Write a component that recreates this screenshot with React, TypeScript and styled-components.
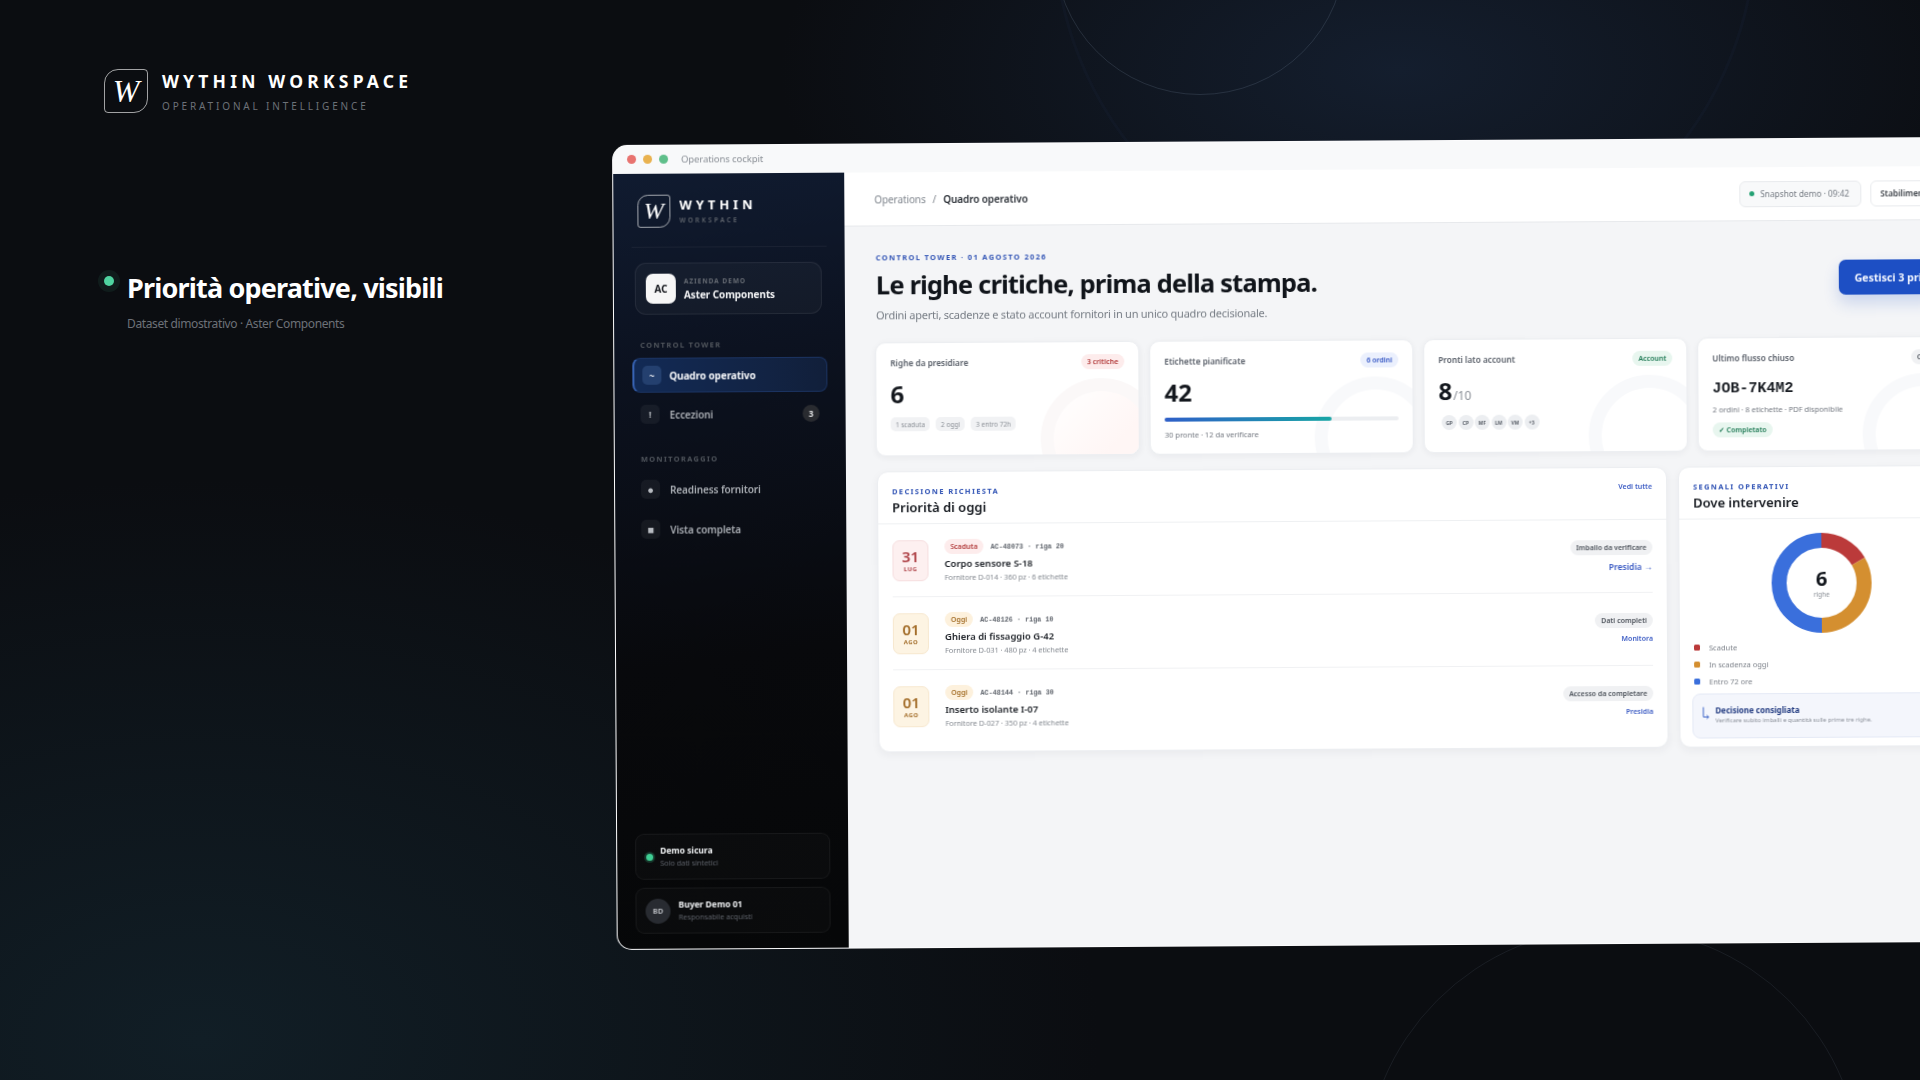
import React from "react";
import styled, { createGlobalStyle } from "styled-components";

const SANS = `"Noto Sans", "Open Sans", sans-serif`;
const MONO = `"Liberation Mono", "DejaVu Sans Mono", monospace`;

const Global = createGlobalStyle`
  html, body {
    margin: 0;
    padding: 0;
    background: #0b0d11;
    font-family: ${SANS};
  }
  *, *::after { box-sizing: border-box; }
`;

const Stage = styled.div`
  position: relative;
  display: flex;
  width: 1920px;
  height: 1080px;
  overflow: hidden;
  background:
    radial-gradient(620px 300px at 1400px 70px, #141e2e 0%, rgba(20, 30, 46, 0) 100%),
    radial-gradient(900px 560px at 200px 1040px, #111e26 0%, rgba(17, 30, 38, 0) 100%),
    #0b0d11;
`;

const Ring = styled.div<{ $x: number; $y: number; $r: number; $w?: number; $c: string }>`
  position: absolute;
  left: ${(p) => p.$x - p.$r}px;
  top: ${(p) => p.$y - p.$r}px;
  width: ${(p) => p.$r * 2}px;
  height: ${(p) => p.$r * 2}px;
  border-radius: 50%;
  border: ${(p) => p.$w ?? 1}px solid ${(p) => p.$c};
`;

/* left caption */
const Intro = styled.div`
  position: relative;
  flex: none;
  width: 612px;
  padding: 69px 0 0 104px;
`;

const Brand = styled.div`
  display: flex;
  gap: 14px;
`;

const LogoBox = styled.div<{ $size: number; $font: number }>`
  display: flex;
  align-items: center;
  justify-content: center;
  flex: none;
  width: ${(p) => p.$size}px;
  height: ${(p) => p.$size}px;
  border: 1px solid rgba(255, 255, 255, 0.62);
  border-radius: 32% 9% 32% 9%;
  color: #fff;
  font-family: "Liberation Serif", serif;
  font-style: italic;
  font-size: ${(p) => p.$font}px;
`;

const BrandName = styled.div`
  margin-top: 1px;
  color: #fff;
  font-size: 17.5px;
  line-height: 22px;
  font-weight: 700;
  letter-spacing: 4.2px;
  white-space: nowrap;
`;

const BrandSub = styled.div`
  margin-top: 8px;
  color: #6d7178;
  font-size: 10px;
  line-height: 13px;
  letter-spacing: 2.85px;
  white-space: nowrap;
`;

const Lead = styled.div`
  display: flex;
  gap: 13px;
  margin-top: 155px;
`;

const LeadDot = styled.span`
  flex: none;
  width: 10px;
  height: 10px;
  margin-top: 8px;
  border-radius: 50%;
  background: #4fd3a0;
  box-shadow: 0 0 0 6px rgba(79, 211, 160, 0.08);
`;

const LeadTitle = styled.h1`
  margin: 0;
  margin-top: 2px;
  color: #fff;
  font-size: 27px;
  line-height: 36px;
  font-weight: 700;
  letter-spacing: -0.82px;
  white-space: nowrap;
`;

const LeadSub = styled.p`
  margin: 10px 0 0;
  color: #6d7178;
  font-size: 12px;
  line-height: 16px;
  letter-spacing: -0.38px;
`;

/* app window */
const Window = styled.div`
  position: relative;
  flex: none;
  display: flex;
  flex-direction: column;
  width: 1381px;
  height: 805px;
  margin-top: 145px;
  overflow: hidden;
  border: 1px solid rgba(255, 255, 255, 0.72);
  border-radius: 15px;
  background: #f4f5f7;
  transform-origin: 0 0;
  transform: rotate(-0.34deg);
  filter: blur(0.3px);
`;

const TitleBar = styled.div`
  flex: none;
  display: flex;
  align-items: center;
  gap: 7px;
  height: 28px;
  padding: 0 0 1px 14px;
  background: #f8f9fa;
`;

const Light = styled.span<{ $c: string }>`
  width: 9px;
  height: 9px;
  border-radius: 50%;
  background: ${(p) => p.$c};
`;

const TitleText = styled.span`
  margin-left: 6px;
  color: #8a8f96;
  font-size: 9.5px;
  letter-spacing: -0.1px;
`;

const Body = styled.div`
  flex: 1;
  min-height: 0;
  display: flex;
`;

/* sidebar */
const Side = styled.aside`
  flex: none;
  display: flex;
  flex-direction: column;
  width: 231px;
  padding: 21px 18px 15px;
  background: linear-gradient(172deg, #101b30 0%, #0c1220 24%, #08090c 62%, #060708 100%);
`;

const SideBrand = styled.div`
  display: flex;
  gap: 9px;
  height: 33px;
  padding-left: 6px;
`;

const SideName = styled.div`
  margin-top: 3px;
  color: #fff;
  font-size: 13px;
  line-height: 15px;
  font-weight: 700;
  letter-spacing: 3.9px;
`;

const SideSub = styled.div`
  margin-top: 3px;
  color: #5f646c;
  font-size: 6.5px;
  line-height: 9px;
  font-weight: 600;
  letter-spacing: 2.3px;
`;

const SideDivider = styled.div`
  height: 1px;
  margin-top: 19px;
  background: rgba(255, 255, 255, 0.05);
`;

const Company = styled.div`
  display: flex;
  align-items: center;
  gap: 8px;
  height: 52px;
  margin: 15px 5px 0 3px;
  padding: 0 10px;
  border: 1px solid rgba(255, 255, 255, 0.07);
  border-radius: 11px;
  background: rgba(255, 255, 255, 0.03);
`;

const CompanyTile = styled.div`
  display: flex;
  align-items: center;
  justify-content: center;
  width: 30px;
  height: 30px;
  border-radius: 7px;
  background: #f6f6f6;
  color: #14171c;
  font-size: 10px;
  font-weight: 700;
`;

const CompanyLabel = styled.div`
  color: #666b73;
  font-size: 6.5px;
  line-height: 9px;
  font-weight: 700;
  letter-spacing: 1px;
`;

const CompanyName = styled.div`
  margin-top: 2px;
  color: #f2f3f5;
  font-size: 10px;
  line-height: 14px;
  font-weight: 700;
  letter-spacing: -0.1px;
`;

const SideLabel = styled.div<{ $top: number }>`
  margin-top: ${(p) => p.$top}px;
  padding-left: 8px;
  color: #50555c;
  font-size: 7.5px;
  line-height: 10px;
  font-weight: 700;
  letter-spacing: 1.3px;
`;

const NavItem = styled.div<{ $active?: boolean; $top: number }>`
  display: flex;
  align-items: center;
  gap: ${(p) => (p.$active ? 8 : 10)}px;
  height: 35px;
  margin-top: ${(p) => p.$top}px;
  padding: 0 8px;
  border-radius: 8px;
  color: ${(p) => (p.$active ? "#f5f7fa" : "#a9adb3")};
  font-size: 10px;
  font-weight: ${(p) => (p.$active ? 700 : 600)};
  letter-spacing: -0.1px;
  ${(p) =>
    p.$active
      ? `background: linear-gradient(90deg, #122a55, #122343 70%, #111f3a);
         border: 1px solid #1b3361;
         border-left: 2px solid #3763b4;`
      : ""}
`;

const NavIcon = styled.span<{ $active?: boolean; $size?: number }>`
  display: flex;
  align-items: center;
  justify-content: center;
  flex: none;
  width: 19px;
  height: 19px;
  border-radius: 5px;
  background: ${(p) => (p.$active ? "#24406f" : "rgba(255,255,255,0.05)")};
  color: ${(p) => (p.$active ? "#fff" : "#b7bbc1")};
  font-size: ${(p) => p.$size ?? 9}px;
  font-weight: 700;
`;

const NavCount = styled.span`
  display: flex;
  align-items: center;
  justify-content: center;
  width: 17px;
  height: 17px;
  margin-left: auto;
  border-radius: 50%;
  background: #292b30;
  color: #e3e4e6;
  font-size: 8px;
  font-weight: 700;
`;

const SideCard = styled.div<{ $auto?: boolean }>`
  display: flex;
  align-items: center;
  flex: none;
  gap: 7px;
  height: 46px;
  margin-top: ${(p) => (p.$auto ? "auto" : "8px")};
  padding: 0 9px;
  border: 1px solid rgba(255, 255, 255, 0.055);
  border-radius: 9px;
  background: rgba(255, 255, 255, 0.018);
`;

const SafeDot = styled.span`
  flex: none;
  width: 7px;
  height: 7px;
  margin-left: 1px;
  border-radius: 50%;
  background: #3fcf94;
  box-shadow: 0 0 0 2px rgba(63, 207, 148, 0.22);
`;

const Avatar = styled.span`
  display: flex;
  align-items: center;
  justify-content: center;
  flex: none;
  width: 25px;
  height: 25px;
  margin-right: 1px;
  border-radius: 50%;
  background: #282b31;
  color: #b5b8bd;
  font-size: 7.5px;
  font-weight: 700;
`;

const SideCardTitle = styled.div`
  color: #eef0f2;
  font-size: 8.5px;
  line-height: 12px;
  font-weight: 700;
`;

const SideCardSub = styled.div`
  margin-top: 1px;
  color: #5c6068;
  font-size: 7.5px;
  line-height: 11px;
  letter-spacing: -0.1px;
`;

/* main */
const Main = styled.main`
  flex: 1;
  min-width: 0;
  display: flex;
  flex-direction: column;
`;

const TopBar = styled.div`
  flex: none;
  display: flex;
  align-items: center;
  height: 54px;
  padding: 0 30px;
  border-bottom: 1px solid #e7e9ec;
  background: #fff;
`;

const Crumb = styled.span<{ $strong?: boolean }>`
  margin-right: 7px;
  color: ${(p) => (p.$strong ? "#2a2f36" : "#7f858d")};
  font-size: 10px;
  font-weight: ${(p) => (p.$strong ? 600 : 400)};
  letter-spacing: -0.1px;
`;

const TopChip = styled.div<{ $first?: boolean; $w: number }>`
  display: flex;
  align-items: center;
  gap: 6px;
  width: ${(p) => p.$w}px;
  height: 26px;
  margin-left: ${(p) => (p.$first ? "auto" : "9px")};
  padding: 0 9px;
  overflow: hidden;
  border: 1px solid #e8eaed;
  border-radius: 6px;
  background: ${(p) => (p.$first ? "#f8f9fa" : "#fff")};
  color: ${(p) => (p.$first ? "#747a82" : "#3a3f46")};
  font-size: 8.3px;
  font-weight: ${(p) => (p.$first ? 400 : 600)};
  white-space: nowrap;
`;

const ChipDot = styled.span`
  flex: none;
  width: 5px;
  height: 5px;
  border-radius: 50%;
  background: #24a173;
`;

const Content = styled.div`
  padding: 26px 30px 0 31px;
`;

const HeadRow = styled.div`
  display: flex;
  justify-content: space-between;
  height: 90px;
`;

const Eyebrow = styled.div`
  color: #3456b6;
  font-size: 7.5px;
  line-height: 11px;
  font-weight: 700;
  letter-spacing: 1.35px;
  white-space: nowrap;
`;

const PageTitle = styled.h2`
  margin: 4px 0 0;
  color: #10141a;
  font-size: 25.5px;
  line-height: 34px;
  font-weight: 700;
  letter-spacing: -0.82px;
  white-space: nowrap;
`;

const PageSub = styled.p`
  margin: 6px 0 0;
  color: #767c84;
  font-size: 11px;
  line-height: 15px;
  letter-spacing: -0.24px;
`;

const PrimaryButton = styled.button`
  flex: none;
  width: 124px;
  height: 35px;
  margin-top: 13px;
  padding: 0;
  border: 0;
  border-radius: 7px;
  background: #1d4fc4;
  box-shadow: 0 8px 16px rgba(29, 79, 196, 0.2);
  color: #f2f6ff;
  font-family: inherit;
  font-size: 10.6px;
  font-weight: 700;
  white-space: nowrap;
`;

const KpiGrid = styled.div`
  display: grid;
  grid-template-columns: repeat(4, 264px);
  gap: 10px;
  margin-left: -1px;
`;

const Kpi = styled.div<{ $tint?: boolean }>`
  position: relative;
  height: 114px;
  padding: 11px 14px;
  overflow: hidden;
  border: 1px solid #eceef1;
  border-radius: 10px;
  background: #fff;
  box-shadow: 0 2px 6px rgba(30, 40, 60, 0.05);

  & > * {
    position: relative;
    z-index: 1;
  }

  &::after {
    content: "";
    position: absolute;
    right: -24px;
    bottom: -46px;
    width: 122px;
    height: 122px;
    border-radius: 50%;
    border: 13px solid ${(p) => (p.$tint ? "#fbf8f8" : "#f8f9fb")};
    background: ${(p) =>
      p.$tint ? "linear-gradient(135deg, #ffffff, #fff6f5 60%)" : "transparent"};
  }
`;

const KpiHead = styled.div`
  display: flex;
  align-items: center;
  justify-content: space-between;
  height: 16px;
`;

const KpiTitle = styled.span`
  color: #5a606a;
  font-size: 8.3px;
  font-weight: 600;
`;

const Tone = {
  red: { bg: "#fdecec", fg: "#b23b3b" },
  blue: { bg: "#ebf0fd", fg: "#3456c4" },
  green: { bg: "#e8f6ef", fg: "#1f7a55" },
  gray: { bg: "#f0f1f3", fg: "#4e545c" },
  amber: { bg: "#fdf1dd", fg: "#a5702a" },
};

const Pill = styled.span<{ $tone: keyof typeof Tone }>`
  display: inline-flex;
  align-items: center;
  flex: none;
  height: 15px;
  padding: 0 6px;
  border-radius: 8px;
  background: ${(p) => Tone[p.$tone].bg};
  color: ${(p) => Tone[p.$tone].fg};
  font-size: 7px;
  font-weight: 600;
  white-space: nowrap;
`;

const KpiValue = styled.div`
  margin-top: 8px;
  color: #14181e;
  font-size: 24px;
  line-height: 32px;
  font-weight: 700;
`;

const KpiUnit = styled.span`
  margin-left: 1px;
  color: #8b9098;
  font-size: 12px;
  font-weight: 400;
`;

const MiniRow = styled.div`
  display: flex;
  gap: 6px;
  margin-top: 7px;
`;

const MiniChip = styled.span`
  display: inline-flex;
  align-items: center;
  height: 14px;
  padding: 0 5px;
  border-radius: 5px;
  background: #f1f2f4;
  color: #8a8f96;
  font-size: 6.5px;
`;

const Bar = styled.div`
  height: 4px;
  margin-top: 9px;
  border-radius: 2px;
  background: #eceef1;
`;

const BarFill = styled.div`
  height: 100%;
  border-radius: 2px;
  background: linear-gradient(90deg, #2f5fc8, #17a5a5);
`;

const KpiNote = styled.div<{ $top: number }>`
  margin-top: ${(p) => p.$top}px;
  color: #737880;
  font-size: 7.5px;
  line-height: 11px;
  white-space: nowrap;
`;

const Initials = styled.div`
  display: flex;
  gap: 1.5px;
  margin: 3px 0 0 3px;
`;

const Initial = styled.span`
  display: flex;
  align-items: center;
  justify-content: center;
  width: 15px;
  height: 15px;
  border-radius: 50%;
  background: #eceef1;
  color: #5b616a;
  font-size: 5px;
  font-weight: 700;
`;

const JobCode = styled.div`
  margin-top: 14px;
  color: #1a1e24;
  font-family: ${MONO};
  font-size: 15px;
  line-height: 20px;
  font-weight: 700;
`;

const PanelGrid = styled.div`
  display: grid;
  grid-template-columns: 790px 286px;
  gap: 11px;
  margin-top: 15px;
`;

const Panel = styled.section`
  height: 281px;
  overflow: hidden;
  border: 1px solid #eceef1;
  border-radius: 11px;
  background: #fff;
  box-shadow: 0 3px 8px rgba(30, 40, 60, 0.05);
`;

const PanelHead = styled.div`
  display: flex;
  justify-content: space-between;
  height: 52px;
  padding: 14px 14px 0;
  border-bottom: 1px solid #eef0f2;
`;

const PanelTitle = styled.h3`
  margin: 2px 0 0;
  color: #15191f;
  font-size: 13px;
  line-height: 17px;
  font-weight: 600;
`;

const LinkText = styled.span<{ $size?: number }>`
  color: #3c5cc4;
  font-size: ${(p) => p.$size ?? 7}px;
  font-weight: 600;
  white-space: nowrap;
`;

const Row = styled.div`
  display: flex;
  align-items: flex-start;
  height: 73px;
  margin: 0 14px;
  padding-top: 16px;
  border-bottom: 1px solid #f0f1f3;

  &:last-child {
    border-bottom: 0;
  }
`;

const DateBox = styled.div<{ $tone: "red" | "amber" }>`
  display: flex;
  flex-direction: column;
  align-items: center;
  justify-content: center;
  flex: none;
  width: 36px;
  height: 41px;
  border: 1px solid ${(p) => (p.$tone === "red" ? "#f6dedf" : "#f7e8cf")};
  border-radius: 7px;
  background: ${(p) => (p.$tone === "red" ? "#fdf0f0" : "#fdf4e3")};
  color: ${(p) => (p.$tone === "red" ? "#ad3f44" : "#a26c28")};
`;

const DateDay = styled.span`
  font-size: 15px;
  line-height: 17px;
  font-weight: 600;
`;

const DateMonth = styled.span`
  font-size: 6px;
  line-height: 9px;
  font-weight: 700;
  letter-spacing: 0.4px;
`;

const RowText = styled.div`
  flex: 1;
  margin-left: 16px;
`;

const RowTop = styled.div`
  display: flex;
  align-items: center;
  gap: 7px;
  height: 15px;
  margin-top: -1px;
`;

const RowCode = styled.span`
  color: #5f646c;
  font-family: ${MONO};
  font-size: 6.8px;
  font-weight: 700;
`;

const RowTitle = styled.div`
  margin-top: 3px;
  color: #20242a;
  font-size: 9.5px;
  line-height: 13px;
  font-weight: 600;
`;

const RowSub = styled.div`
  margin-top: 2px;
  color: #868b92;
  font-size: 7.5px;
  line-height: 11px;
  letter-spacing: -0.1px;
`;

const RowSide = styled.div`
  display: flex;
  flex-direction: column;
  align-items: flex-end;
  gap: 6px;
  padding-top: 4px;
`;

const DonutWrap = styled.div`
  position: relative;
  width: 100px;
  height: 100px;
  margin: 14px auto 0;
`;

const DonutCenter = styled.div`
  position: absolute;
  inset: 0;
  display: flex;
  flex-direction: column;
  align-items: center;
  justify-content: center;
`;

const DonutValue = styled.span`
  color: #14181e;
  font-size: 20px;
  line-height: 22px;
  font-weight: 700;
`;

const DonutLabel = styled.span`
  color: #8a8f96;
  font-size: 6.5px;
  line-height: 9px;
`;

const Legend = styled.div`
  display: flex;
  flex-direction: column;
  gap: 6px;
  margin: 8px 0 0 14px;
`;

const LegendItem = styled.div`
  display: flex;
  align-items: center;
  gap: 9px;
  height: 11px;
  color: #7d828a;
  font-size: 7.5px;
`;

const Swatch = styled.span<{ $c: string }>`
  width: 6px;
  height: 6px;
  border-radius: 1.5px;
  background: ${(p) => p.$c};
`;

const Advice = styled.div`
  display: flex;
  gap: 5px;
  height: 45px;
  margin: 7px 0 0 12px;
  padding: 10px 8px;
  border: 1px solid #e4e9f5;
  border-radius: 8px;
  background: #f4f6fc;
`;

const AdviceTitle = styled.div`
  color: #213a80;
  font-size: 8px;
  line-height: 11px;
  font-weight: 700;
`;

const AdviceText = styled.div`
  margin-top: 1px;
  color: #8a8f98;
  font-size: 6px;
  line-height: 9px;
  white-space: nowrap;
`;

const rows = [
  { day: "31", month: "LUG", tone: "red", pill: "Scaduta", code: "AC-48073 · riga 20", title: "Corpo sensore S-18", sub: "Fornitore D-014 · 360 pz · 6 etichette", status: "Imballo da verificare", link: "Presidia →", size: 8.5 },
  { day: "01", month: "AGO", tone: "amber", pill: "Oggi", code: "AC-48126 · riga 10", title: "Ghiera di fissaggio G-42", sub: "Fornitore D-031 · 480 pz · 4 etichette", status: "Dati completi", link: "Monitora", size: 7 },
  { day: "01", month: "AGO", tone: "amber", pill: "Oggi", code: "AC-48144 · riga 30", title: "Inserto isolante I-07", sub: "Fornitore D-027 · 350 pz · 4 etichette", status: "Accesso da completare", link: "Presidia", size: 7 },
] as const;

const legend = [
  { label: "Scadute", color: "#bb3a3a" },
  { label: "In scadenza oggi", color: "#d48f30" },
  { label: "Entro 72 ore", color: "#3a6fdc" },
];

const Donut = () => (
  <svg width="100" height="100" viewBox="0 0 100 100">
    <g transform="rotate(-90 50 50)" fill="none" strokeWidth="15">
      <circle cx="50" cy="50" r="42.5" pathLength={6} stroke="#bb3a3a" strokeDasharray="1 5" />
      <circle cx="50" cy="50" r="42.5" pathLength={6} stroke="#d48f30" strokeDasharray="2 4" strokeDashoffset={-1} />
      <circle cx="50" cy="50" r="42.5" pathLength={6} stroke="#3a6fdc" strokeDasharray="3 3" strokeDashoffset={-3} />
    </g>
  </svg>
);

const AdviceIcon = () => (
  <svg width="9" height="14" viewBox="0 0 9 14" fill="none" style={{ flex: "none", marginTop: 2 }}>
    <path d="M2 1v9.5h5M5.6 9l1.6 1.5L5.6 12" stroke="#3f66c8" strokeWidth="1" strokeLinecap="round" strokeLinejoin="round" />
  </svg>
);

export default function App() {
  return (
    <Stage>
      <Global />
      <Ring $x={1200} $y={-51} $r={146} $c="rgba(120,135,160,0.22)" />
      <Ring $x={1405} $y={-72} $r={352} $w={3} $c="rgba(40,60,95,0.1)" />
      <Ring $x={1613} $y={1176} $r={249} $c="rgba(110,125,150,0.14)" />

      <Intro>
        <Brand>
          <LogoBox $size={44} $font={32}>W</LogoBox>
          <div>
            <BrandName>WYTHIN WORKSPACE</BrandName>
            <BrandSub>OPERATIONAL INTELLIGENCE</BrandSub>
          </div>
        </Brand>
        <Lead>
          <LeadDot />
          <div>
            <LeadTitle>Priorità operative, visibili</LeadTitle>
            <LeadSub>Dataset dimostrativo · Aster Components</LeadSub>
          </div>
        </Lead>
      </Intro>

      <Window>
        <TitleBar>
          <Light $c="#e8736f" />
          <Light $c="#e9b24f" />
          <Light $c="#5fbf8a" />
          <TitleText>Operations cockpit</TitleText>
        </TitleBar>
        <Body>
          <Side>
            <SideBrand>
              <LogoBox $size={33} $font={24}>W</LogoBox>
              <div>
                <SideName>WYTHIN</SideName>
                <SideSub>WORKSPACE</SideSub>
              </div>
            </SideBrand>
            <SideDivider />
            <Company>
              <CompanyTile>AC</CompanyTile>
              <div>
                <CompanyLabel>AZIENDA DEMO</CompanyLabel>
                <CompanyName>Aster Components</CompanyName>
              </div>
            </Company>
            <SideLabel $top={25}>CONTROL TOWER</SideLabel>
            <NavItem $active $top={8}>
              <NavIcon $active>~</NavIcon>
              Quadro operativo
            </NavItem>
            <NavItem $top={4}>
              <NavIcon>!</NavIcon>
              Eccezioni
              <NavCount>3</NavCount>
            </NavItem>
            <SideLabel $top={22}>MONITORAGGIO</SideLabel>
            <NavItem $top={8}>
              <NavIcon $size={11}>●</NavIcon>
              Readiness fornitori
            </NavItem>
            <NavItem $top={5}>
              <NavIcon $size={11}>■</NavIcon>
              Vista completa
            </NavItem>
            <SideCard $auto>
              <SafeDot />
              <div>
                <SideCardTitle>Demo sicura</SideCardTitle>
                <SideCardSub>Solo dati sintetici</SideCardSub>
              </div>
            </SideCard>
            <SideCard>
              <Avatar>BD</Avatar>
              <div>
                <SideCardTitle>Buyer Demo 01</SideCardTitle>
                <SideCardSub>Responsabile acquisti</SideCardSub>
              </div>
            </SideCard>
          </Side>

          <Main>
            <TopBar>
              <Crumb>Operations</Crumb>
              <Crumb>/</Crumb>
              <Crumb $strong>Quadro operativo</Crumb>
              <TopChip $first $w={122}>
                <ChipDot />
                Snapshot demo · 09:42
              </TopChip>
              <TopChip $w={92}>Stabilimento Nord</TopChip>
            </TopBar>
            <Content>
              <HeadRow>
                <div>
                  <Eyebrow>CONTROL TOWER · 01 AGOSTO 2026</Eyebrow>
                  <PageTitle>Le righe critiche, prima della stampa.</PageTitle>
                  <PageSub>Ordini aperti, scadenze e stato account fornitori in un unico quadro decisionale.</PageSub>
                </div>
                <PrimaryButton type="button">Gestisci 3 priorità</PrimaryButton>
              </HeadRow>

              <KpiGrid>
                <Kpi $tint>
                  <KpiHead>
                    <KpiTitle>Righe da presidiare</KpiTitle>
                    <Pill $tone="red">3 critiche</Pill>
                  </KpiHead>
                  <KpiValue>6</KpiValue>
                  <MiniRow>
                    <MiniChip>1 scaduta</MiniChip>
                    <MiniChip>2 oggi</MiniChip>
                    <MiniChip>3 entro 72h</MiniChip>
                  </MiniRow>
                </Kpi>
                <Kpi>
                  <KpiHead>
                    <KpiTitle>Etichette pianificate</KpiTitle>
                    <Pill $tone="blue">6 ordini</Pill>
                  </KpiHead>
                  <KpiValue>42</KpiValue>
                  <Bar>
                    <BarFill style={{ width: `${(30 / 42) * 100}%` }} />
                  </Bar>
                  <KpiNote $top={8}>30 pronte · 12 da verificare</KpiNote>
                </Kpi>
                <Kpi>
                  <KpiHead>
                    <KpiTitle>Pronti lato account</KpiTitle>
                    <Pill $tone="green">Account</Pill>
                  </KpiHead>
                  <KpiValue>
                    8<KpiUnit>/10</KpiUnit>
                  </KpiValue>
                  <Initials>
                    {["GP", "CP", "MF", "LM", "VM", "+3"].map((t) => (
                      <Initial key={t}>{t}</Initial>
                    ))}
                  </Initials>
                </Kpi>
                <Kpi>
                  <KpiHead>
                    <KpiTitle>Ultimo flusso chiuso</KpiTitle>
                    <Pill $tone="gray">Chiuso</Pill>
                  </KpiHead>
                  <JobCode>JOB-7K4M2</JobCode>
                  <KpiNote $top={5}>2 ordini · 8 etichette · PDF disponibile</KpiNote>
                  <MiniRow>
                    <Pill $tone="green">✓ Completato</Pill>
                  </MiniRow>
                </Kpi>
              </KpiGrid>

              <PanelGrid>
                <Panel>
                  <PanelHead>
                    <div>
                      <Eyebrow>DECISIONE RICHIESTA</Eyebrow>
                      <PanelTitle>Priorità di oggi</PanelTitle>
                    </div>
                    <LinkText>Vedi tutte</LinkText>
                  </PanelHead>
                  {rows.map((r) => (
                    <Row key={r.code}>
                      <DateBox $tone={r.tone}>
                        <DateDay>{r.day}</DateDay>
                        <DateMonth>{r.month}</DateMonth>
                      </DateBox>
                      <RowText>
                        <RowTop>
                          <Pill $tone={r.tone}>{r.pill}</Pill>
                          <RowCode>{r.code}</RowCode>
                        </RowTop>
                        <RowTitle>{r.title}</RowTitle>
                        <RowSub>{r.sub}</RowSub>
                      </RowText>
                      <RowSide>
                        <Pill $tone="gray">{r.status}</Pill>
                        <LinkText $size={r.size}>{r.link}</LinkText>
                      </RowSide>
                    </Row>
                  ))}
                </Panel>
                <Panel>
                  <PanelHead>
                    <div>
                      <Eyebrow>SEGNALI OPERATIVI</Eyebrow>
                      <PanelTitle>Dove intervenire</PanelTitle>
                    </div>
                  </PanelHead>
                  <DonutWrap>
                    <Donut />
                    <DonutCenter>
                      <DonutValue>6</DonutValue>
                      <DonutLabel>righe</DonutLabel>
                    </DonutCenter>
                  </DonutWrap>
                  <Legend>
                    {legend.map((l) => (
                      <LegendItem key={l.label}>
                        <Swatch $c={l.color} />
                        {l.label}
                      </LegendItem>
                    ))}
                  </Legend>
                  <Advice>
                    <AdviceIcon />
                    <div>
                      <AdviceTitle>Decisione consigliata</AdviceTitle>
                      <AdviceText>Verificare subito imballi e quantità sulle prime tre righe.</AdviceText>
                    </div>
                  </Advice>
                </Panel>
              </PanelGrid>
            </Content>
          </Main>
        </Body>
      </Window>
    </Stage>
  );
}
